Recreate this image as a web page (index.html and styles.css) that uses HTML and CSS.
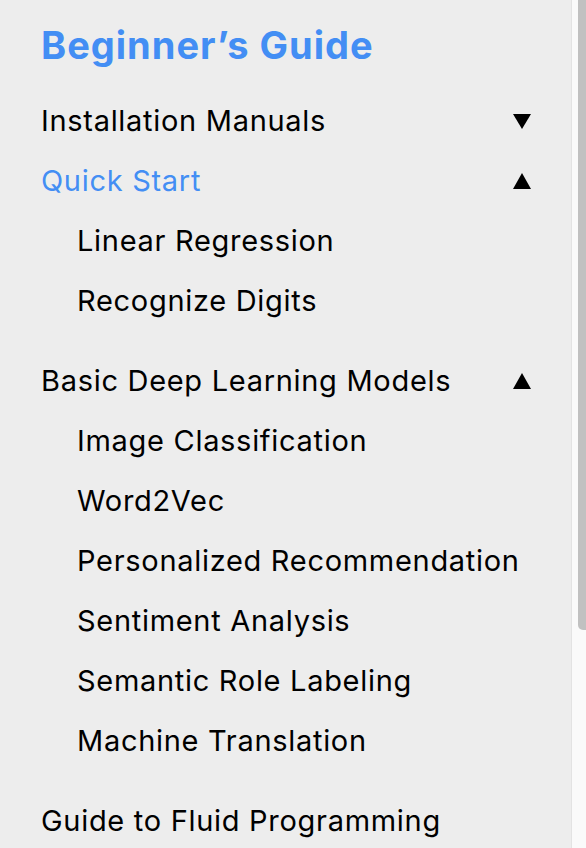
FILE: index.html
```html
<!DOCTYPE html>
<html lang="en">
<head>
<meta charset="utf-8">
<title>Beginner's Guide</title>
<link rel="stylesheet" href="styles.css">
</head>
<body>
<div class="frame">
  <nav class="sidebar">
    <h1 class="title">Beginner’s Guide</h1>
    <ul class="menu">
      <li class="group">
        <div class="row"><span class="label">Installation Manuals</span>
          <svg class="arrow" width="20" height="16" viewBox="0 0 20 16"><polygon points="1,1 19,1 10,16" fill="#000"/></svg>
        </div>
      </li>
      <li class="group open">
        <div class="row active"><span class="label">Quick Start</span>
          <svg class="arrow" width="20" height="16" viewBox="0 0 20 16"><polygon points="10,0 19,16 1,16" fill="#000"/></svg>
        </div>
        <ul class="sub">
          <li class="row"><span class="label">Linear Regression</span></li>
          <li class="row"><span class="label">Recognize Digits</span></li>
        </ul>
      </li>
      <li class="group open">
        <div class="row"><span class="label">Basic Deep Learning Models</span>
          <svg class="arrow" width="20" height="16" viewBox="0 0 20 16"><polygon points="10,0 19,16 1,16" fill="#000"/></svg>
        </div>
        <ul class="sub">
          <li class="row"><span class="label">Image Classification</span></li>
          <li class="row"><span class="label">Word2Vec</span></li>
          <li class="row"><span class="label">Personalized Recommendation</span></li>
          <li class="row"><span class="label">Sentiment Analysis</span></li>
          <li class="row"><span class="label">Semantic Role Labeling</span></li>
          <li class="row"><span class="label">Machine Translation</span></li>
        </ul>
      </li>
      <li class="group">
        <div class="row"><span class="label">Guide to Fluid Programming</span></div>
      </li>
    </ul>
  </nav>
  <div class="scrollbar"><div class="thumb"></div></div>
</div>
</body>
</html>
```
FILE: styles.css
```css
html, body {
  margin: 0;
  padding: 0;
  background: #ededed;
}
body {
  font-family: Inter, "Noto Sans", "Liberation Sans", sans-serif;
  color: #000;
}
.frame {
  display: flex;
  height: 848px;
  overflow: hidden;
}
.sidebar {
  flex: 1;
  padding: 21px 39px 0 41px;
  overflow: hidden;
}
.title {
  margin: 0 0 22px 0;
  font-size: 38px;
  line-height: 48px;
  font-weight: 700;
  color: #438ef4;
  letter-spacing: 1px;
}
.menu, .sub {
  list-style: none;
  margin: 0;
  padding: 0;
}
.row {
  display: flex;
  align-items: center;
  justify-content: space-between;
  height: 60px;
  font-size: 29px;
  line-height: 60px;
  letter-spacing: 0.7px;
  white-space: nowrap;
}
.row.active {
  color: #438ef4;
}
.arrow {
  flex: none;
  display: block;
}
.sub {
  padding-left: 36px;
  padding-bottom: 20px;
}
.scrollbar {
  flex: none;
  width: 14px;
  border-left: 1px solid #e3e3e3;
  background: #fafafa;
  display: flex;
  justify-content: flex-end;
  align-items: flex-start;
}
.thumb {
  width: 8px;
  height: 630px;
  background: #c1c1c1;
  border-bottom-left-radius: 5px;
}
```
